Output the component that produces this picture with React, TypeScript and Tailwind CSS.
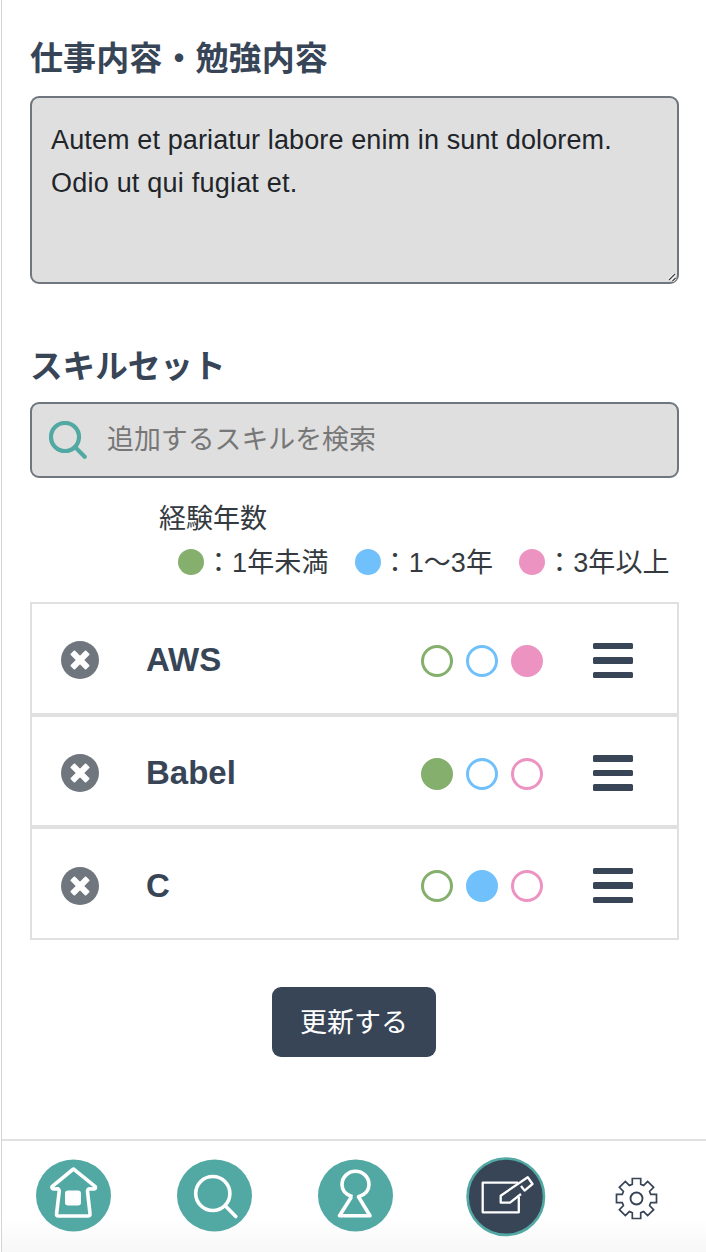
import React from "react";

type Level = 0 | 1 | 2;

const skills: { name: string; level: Level }[] = [
  { name: "AWS", level: 2 },
  { name: "Babel", level: 0 },
  { name: "C", level: 1 },
];

const filled = [
  "border-[#84af6c] bg-[#84af6c]",
  "border-[#70c0fb] bg-[#70c0fb]",
  "border-[#ed93c2] bg-[#ed93c2]",
];
const outlined = ["border-[#84af6c]", "border-[#70c0fb]", "border-[#ed93c2]"];

const legend = [
  { dot: "bg-[#84af6c]", text: "1年未満", gap: "mr-[26px]" },
  { dot: "bg-[#70c0fb]", text: "1〜3年", gap: "mr-[26px]" },
  { dot: "bg-[#ed93c2]", text: "3年以上", gap: "" },
];

function SkillRow({ name, level }: { name: string; level: Level }) {
  return (
    <li className="flex flex-1 items-center border-2 border-[#e0e0e0] pt-[4px] pl-[29px]">
      <svg className="size-[38px] shrink-0" viewBox="0 0 38 38">
        <circle cx="19" cy="19" r="19" fill="#6f767e" />
        <g transform="rotate(45 19 19)" fill="#fff">
          <rect x="8" y="15.9" width="22" height="6.2" rx="1" />
          <rect x="15.9" y="8" width="6.2" height="22" rx="1" />
        </g>
      </svg>
      <span className="ml-[47px] w-[275px] text-[33px] leading-[40px] font-bold text-[#374557]">{name}</span>
      <div className="flex gap-[13px] pt-px">
        {[0, 1, 2].map((i) => (
          <span key={i} className={"size-8 rounded-full border-3 " + (i === level ? filled[i] : outlined[i])} />
        ))}
      </div>
      <div className="ml-[50px] flex w-10 flex-col gap-[8px]">
        <span className="h-[6.5px] rounded-[1.5px] bg-[#374557]" />
        <span className="h-[6.5px] rounded-[1.5px] bg-[#374557]" />
        <span className="h-[6.5px] rounded-[1.5px] bg-[#374557]" />
      </div>
    </li>
  );
}

function gearPath() {
  const pts: string[] = [];
  for (let i = 0; i < 8; i++) {
    const base = (i * Math.PI) / 4;
    const corners = [
      [-5.6, -13.6],
      [-4.2, -14.3],
      [-4.2, -20],
      [4.2, -20],
      [4.2, -14.3],
      [5.6, -13.6],
    ];
    corners.forEach(([x, y]) => {
      const px = 21.5 + x * Math.cos(base) - y * Math.sin(base);
      const py = 21.5 + x * Math.sin(base) + y * Math.cos(base);
      pts.push(px.toFixed(2) + " " + py.toFixed(2));
    });
  }
  return "M" + pts.join("L") + "Z";
}

export default function App() {
  return (
    <div className="flex h-[1252px] w-[706px] flex-col overflow-hidden bg-white pl-px font-['Liberation_Sans','Noto_Sans_CJK_JP',sans-serif]">
      <div className="flex flex-1 flex-col border-l border-[#d4d4d4]">
        <main className="flex h-[1139px] flex-col pr-[27px] pl-[28px]">
          <h2 className="mt-[35px] h-[48px] text-[33px] leading-[48px] font-bold tracking-[0.1px] text-[#374557]">仕事内容・勉強内容</h2>
          <div className="relative mt-[13px] h-[188px] rounded-[9px] border-2 border-[#6f767e] bg-[#dfdfdf] pt-[21px] pl-[19px] text-[27px] leading-[43px] text-[#212529]">
            <p className="tracking-[0.12px] whitespace-nowrap">Autem et pariatur labore enim in sunt dolorem.</p>
            <p className="tracking-[0.22px]">Odio ut qui fugiat et.</p>
            <svg className="absolute right-0 bottom-0" width="9" height="9" viewBox="0 0 9 9">
              <path d="M1 7 L7 1 M4.5 8 L7.5 5" stroke="#fff" strokeWidth="3" />
              <path d="M1 7 L7 1 M4.5 8 L7.5 5" stroke="#3c3c3c" strokeWidth="1.2" />
            </svg>
          </div>
          <h2 className="mt-[59px] h-[48px] text-[32.6px] leading-[48px] font-bold text-[#374557]">スキルセット</h2>
          <div className="mt-[11px] flex h-[76px] items-center rounded-[9px] border-2 border-[#6f767e] bg-[#dfdfdf] pl-[17px] text-[26.9px] text-[#777]">
            <svg className="size-[38px]" viewBox="0 0 38 38" fill="none" stroke="#52a9a3" strokeWidth="4.2">
              <circle cx="16" cy="16" r="14" />
              <path d="M26 26 L35.7 35.7" strokeLinecap="round" />
            </svg>
            <span className="ml-[20px] leading-[40px]">追加するスキルを検索</span>
          </div>
          <p className="mt-[19px] ml-[129px] h-[44px] text-[27px] leading-[44px] text-[#343a40]">経験年数</p>
          <div className="flex h-[44px] items-center pl-[148px] text-[27px] text-[#343a40]">
            {legend.map((l) => (
              <div key={l.text} className={"flex items-center whitespace-nowrap " + l.gap}>
                <span className={"-mt-[2px] size-[26px] shrink-0 rounded-full " + l.dot} />
                <span className="pl-px leading-[44px] tracking-[0.1px]">：{l.text}</span>
              </div>
            ))}
          </div>
          <ul className="mt-[17px] flex h-[338px] flex-col">
            {skills.map((s) => (
              <SkillRow key={s.name} {...s} />
            ))}
          </ul>
          <button className="mt-[47px] mr-px h-[70px] w-[164px] self-center rounded-[9px] bg-[#374557] pt-[2px] text-[27px] text-white">更新する</button>
        </main>
        <footer className="flex h-[113px] items-start border-t-2 border-[#e1e1e1] bg-linear-to-b from-white from-70% to-[#f7f7f7] pl-[34px]">
          <svg className="mt-[18px] shrink-0" width="75" height="73" viewBox="0 -0.5 75 73" fill="none">
            <ellipse cx="37.5" cy="36" rx="37.5" ry="36" fill="#52a9a3" />
            <path d="M36.8 10 L16 27.2 Q15.5 29.5 18 29.5 L21.7 29.2 Q23.3 29.8 23.2 32 L20.6 54 Q20 56.5 22.5 56.5 H51.5 Q54.5 56.5 54 54 L51.5 32 Q51.5 29.5 53.5 29.2 L58 29.5 Q60 29.5 59.3 27.2 L38.6 10.3 Q37.6 9.3 36.8 10 Z" stroke="#fff" strokeWidth="3.6" strokeLinejoin="round" />
            <rect x="29" y="31" width="16" height="15" rx="3" fill="#fff" />
          </svg>
          <svg className="mt-[18px] ml-[66px] shrink-0" width="75" height="73" viewBox="0 -0.5 75 73" fill="none">
            <ellipse cx="37.5" cy="36" rx="37.5" ry="36" fill="#52a9a3" />
            <ellipse cx="35.8" cy="34" rx="17.1" ry="17" stroke="#fff" strokeWidth="3.6" />
            <path d="M48.5 46.5 L58.8 57" stroke="#fff" strokeWidth="3.6" strokeLinecap="round" />
          </svg>
          <svg className="mt-[18px] ml-[66px] shrink-0" width="75" height="73" viewBox="0 -0.5 75 73" fill="none">
            <ellipse cx="37.5" cy="36" rx="37.5" ry="36" fill="#52a9a3" />
            <path d="M34.5 37.2 C27.5 35.2 24 30.3 24 25 A13.5 13.3 0 0 1 51 25 C51 30.3 47.5 35.2 40.5 37.2 L52 56.2 H21.5 L33.5 37.2" stroke="#fff" strokeWidth="3.6" strokeLinejoin="round" />
          </svg>
          <svg className="mt-[16px] ml-[73px] shrink-0" width="80" height="80" viewBox="0 0 80 80" fill="none">
            <circle cx="39.8" cy="39.7" r="38.2" fill="#374557" stroke="#52a9a3" strokeWidth="2.6" />
            <path d="M52 25.7 H16.7 V55.3 H52.8 V40" stroke="#fff" strokeWidth="2.3" strokeLinejoin="round" />
            <path d="M55 37 L44 45.7 H34.7 V38.7 L61.7 20.2 L66.5 27 L58.6 33.6 L55 29" stroke="#fff" strokeWidth="2.3" strokeLinejoin="round" />
          </svg>
          <svg className="mt-[36px] ml-[69px] shrink-0" width="43" height="43" viewBox="0 0 43 43" fill="none" stroke="#374557">
            <path d={gearPath()} strokeWidth="1.7" />
            <circle cx="21.5" cy="21.5" r="6" strokeWidth="1.9" />
          </svg>
        </footer>
      </div>
    </div>
  );
}
